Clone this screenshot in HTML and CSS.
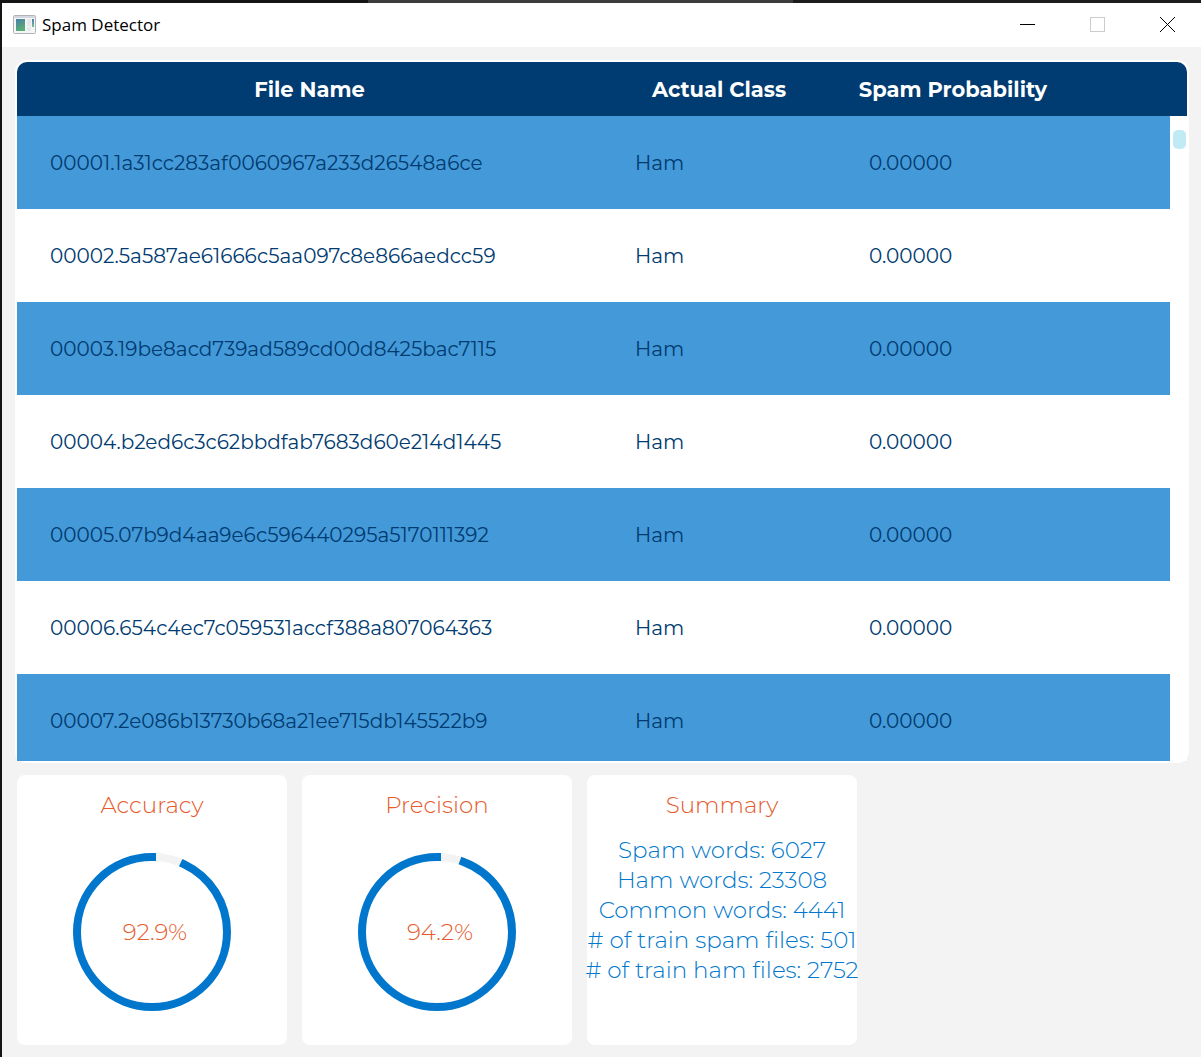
FILE: index.html
```html
<!DOCTYPE html>
<html lang="en">
<head>
<meta charset="utf-8">
<title>Spam Detector</title>
<link rel="stylesheet" href="styles.css">
</head>
<body>
<div class="window">
  <header class="titlebar">
    <svg class="app-icon" width="24" height="20" viewBox="0 0 24 20" aria-hidden="true">
      <defs>
        <linearGradient id="pane" x1="0" y1="0" x2="0.4" y2="1">
          <stop offset="0" stop-color="#4a7fa8"/>
          <stop offset="1" stop-color="#58ad74"/>
        </linearGradient>
        <linearGradient id="strip" x1="0" y1="0" x2="0" y2="1">
          <stop offset="0" stop-color="#4a78b0"/>
          <stop offset="1" stop-color="#7cc08c"/>
        </linearGradient>
      </defs>
      <rect x="0.5" y="0.5" width="22" height="18" rx="1" fill="#f4f5f6" stroke="#b0b4b8"/>
      <rect x="1" y="1" width="21" height="2" fill="#d3d8e0"/>
      <rect x="3" y="4" width="9" height="12" fill="url(#pane)"/>
      <rect x="14" y="4" width="4" height="7" fill="#e6e8ea"/>
      <rect x="19" y="4" width="2" height="8" fill="url(#strip)"/>
      <rect x="14" y="12" width="4" height="4" fill="#e6e8ea"/>
    </svg>
    <h1 class="title">Spam Detector</h1>
    <div class="controls">
      <button class="control" type="button" aria-label="Minimize">
        <svg width="15" height="15" viewBox="0 0 15 15"><path d="M0 7.5H15" stroke="#000"/></svg>
      </button>
      <button class="control" type="button" aria-label="Maximize" disabled>
        <svg width="15" height="15" viewBox="0 0 15 15"><rect x="0.5" y="0.5" width="14" height="14" fill="none" stroke="#ccc"/></svg>
      </button>
      <button class="control" type="button" aria-label="Close">
        <svg width="15" height="15" viewBox="0 0 15 15"><path d="M0 0L15 15M15 0L0 15" stroke="#000"/></svg>
      </button>
    </div>
  </header>

  <main class="content">
    <section class="results">
      <div class="viewport">
        <table class="table">
          <thead>
            <tr><th class="wide">File Name</th><th class="narrow">Actual Class</th><th class="narrow">Spam Probability</th><th></th></tr>
          </thead>
          <tbody>
            <tr><td>00001.1a31cc283af0060967a233d26548a6ce</td><td>Ham</td><td>0.00000</td><td></td></tr>
            <tr><td>00002.5a587ae61666c5aa097c8e866aedcc59</td><td>Ham</td><td>0.00000</td><td></td></tr>
            <tr><td>00003.19be8acd739ad589cd00d8425bac7115</td><td>Ham</td><td>0.00000</td><td></td></tr>
            <tr><td>00004.b2ed6c3c62bbdfab7683d60e214d1445</td><td>Ham</td><td>0.00000</td><td></td></tr>
            <tr><td>00005.07b9d4aa9e6c596440295a5170111392</td><td>Ham</td><td>0.00000</td><td></td></tr>
            <tr><td>00006.654c4ec7c059531accf388a807064363</td><td>Ham</td><td>0.00000</td><td></td></tr>
            <tr><td>00007.2e086b13730b68a21ee715db145522b9</td><td>Ham</td><td>0.00000</td><td></td></tr>
          </tbody>
        </table>
        <div class="scrollbar"><div class="thumb"></div></div>
      </div>
    </section>

    <div class="cards">
      <section class="card">
        <h2 class="card-title">Accuracy</h2>
        <div class="gauge">
          <svg class="ring" width="158" height="158" viewBox="-79 -79 158 158" aria-hidden="true">
            <circle class="track" r="75"/>
            <circle class="value" r="75" pathLength="100" stroke-dasharray="92.9 7.1" transform="rotate(-90) scale(1 -1)"/>
          </svg>
          <span class="percent">92.9%</span>
        </div>
      </section>
      <section class="card">
        <h2 class="card-title">Precision</h2>
        <div class="gauge">
          <svg class="ring" width="158" height="158" viewBox="-79 -79 158 158" aria-hidden="true">
            <circle class="track" r="75"/>
            <circle class="value" r="75" pathLength="100" stroke-dasharray="94.2 5.8" transform="rotate(-90) scale(1 -1)"/>
          </svg>
          <span class="percent">94.2%</span>
        </div>
      </section>
      <section class="card">
        <h2 class="card-title">Summary</h2>
        <ul class="summary">
          <li>Spam words: 6027</li>
          <li>Ham words: 23308</li>
          <li>Common words: 4441</li>
          <li># of train spam files: 501</li>
          <li># of train ham files: 2752</li>
        </ul>
      </section>
    </div>
  </main>
</div>
</body>
</html>
```
FILE: styles.css
```css
* {
  box-sizing: border-box;
}

body {
  margin: 0;
  height: 100vh;
  padding: 3px 0 0 2px;
  background: linear-gradient(90deg, #151515 368px, #3c3c3c 368px, #3c3c3c 793px, #1c1c1c 793px);
  font-family: Montserrat, Inter, "Liberation Sans", sans-serif;
}

.window {
  display: flex;
  flex-direction: column;
  height: 100%;
  background: #f3f3f3;
}

/* Title bar */
.titlebar {
  display: flex;
  align-items: center;
  flex: none;
  height: 44px;
  padding-left: 11px;
  background: #fff;
}

.app-icon {
  margin-right: 5px;
}

.title {
  margin: 0;
  font: 400 17px/24px "Open Sans", "Noto Sans", sans-serif;
  color: #000;
}

.controls {
  display: flex;
  align-self: stretch;
  margin-left: auto;
}

.control {
  display: grid;
  place-items: center;
  width: 70px;
  padding: 0 0 2px 2px;
  border: 0;
  background: none;
}

/* Results table */
.content {
  display: flex;
  flex-direction: column;
  flex: 1;
  min-height: 0;
  gap: 12px;
  padding: 13px 12px 12px 13px;
}

.results {
  flex: 1;
  min-height: 0;
  padding: 2px;
  border-radius: 12px;
  background: #fff;
}

.viewport {
  position: relative;
  height: 100%;
  overflow: hidden;
  border-radius: 10px 10px 0 0;
}

.table {
  width: 100%;
  table-layout: fixed;
  border-collapse: collapse;
  color: #003b71;
}

.table th {
  height: 54px;
  padding: 0;
  background: #003b71;
  color: #fff;
  font-size: 21px;
  font-weight: 700;
}

.wide {
  width: 50%;
}

.narrow {
  width: 20%;
}

.table td {
  height: 93px;
  padding: 0 0 0 33px;
  font-size: 20px;
  font-weight: 400;
}

.table tbody tr:nth-child(odd) {
  background: #4499d8;
}

.scrollbar {
  position: absolute;
  top: 54px;
  right: 0;
  bottom: 0;
  width: 17px;
  padding: 14px 1px 0 3px;
  background: #fff;
}

.thumb {
  height: 19px;
  border-radius: 5px;
  background: #c0ebf5;
}

/* Statistic cards */
.cards {
  display: flex;
  flex: none;
  gap: 15px;
  padding-left: 2px;
}

.card {
  display: flex;
  flex-direction: column;
  align-items: center;
  width: 270px;
  height: 270px;
  padding-top: 15px;
  border-radius: 8px;
  background: #fff;
  font-size: 23px;
  font-weight: 300;
  line-height: 30px;
}

.card-title {
  margin: 0;
  font-size: inherit;
  font-weight: inherit;
  color: #e65a2b;
}

.gauge {
  display: grid;
  place-items: center;
  margin-top: 33px;
}

.ring,
.percent {
  grid-area: 1 / 1;
}

.track,
.value {
  fill: none;
  stroke-width: 8px;
}

.track {
  stroke: #f3f3f3;
}

.value {
  stroke: #0077cc;
  stroke-linecap: square;
}

.percent {
  padding-left: 6px;
  color: #e65a2b;
}

.summary {
  margin: 15px 0 0;
  padding: 0;
  list-style: none;
  text-align: center;
  white-space: nowrap;
  color: #0077cc;
}
```
